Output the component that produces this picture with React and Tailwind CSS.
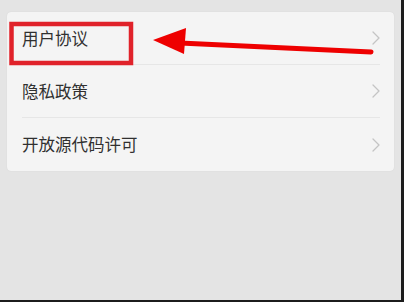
const items = ["用户协议", "隐私政策", "开放源代码许可"];

function Chevron() {
  return (
    <svg width="8" height="14" viewBox="0 0 8 14" fill="none" className="shrink-0">
      <path d="M1 1l6 6-6 6" stroke="#c4c4c4" strokeWidth="1.3" strokeLinecap="round" strokeLinejoin="round" />
    </svg>
  );
}

export default function App() {
  return (
    <div className="w-[404px] h-[302px] bg-[#1c1c1c] overflow-hidden">
      <div
        className="relative w-[401px] h-[300px] bg-[#e4e4e4] pt-[12px] pl-[7px]"
        style={{ fontFamily: '"Noto Sans CJK SC", "Noto Sans", sans-serif' }}
      >
        <div className="w-[387px] bg-[#f4f4f4] rounded-[4px] shadow-[0_0_1px_rgba(0,0,0,0.12)]">
          {items.map((t, i) => (
            <div key={t} className="pl-[15px] pr-[14px]">
              <div
                className={`h-[53px] flex items-center justify-between ${
                  i < items.length - 1 ? "border-b border-[#e6e6e6]" : ""
                }`}
              >
                <span className="text-[16.5px] text-[#303030] leading-none">{t}</span>
                <Chevron />
              </div>
            </div>
          ))}
        </div>

        <svg className="absolute left-0 top-0 pointer-events-none" width="401" height="300">
          <rect x="11.5" y="24" width="119.5" height="39" fill="none" stroke="#e0222a" strokeWidth="4.5" />
          <line x1="180" y1="43" x2="371" y2="52" stroke="#ee0000" strokeWidth="5" strokeLinecap="round" />
          <polygon points="153,40 186,28 184,54" fill="#ee0000" />
        </svg>
      </div>
    </div>
  );
}
